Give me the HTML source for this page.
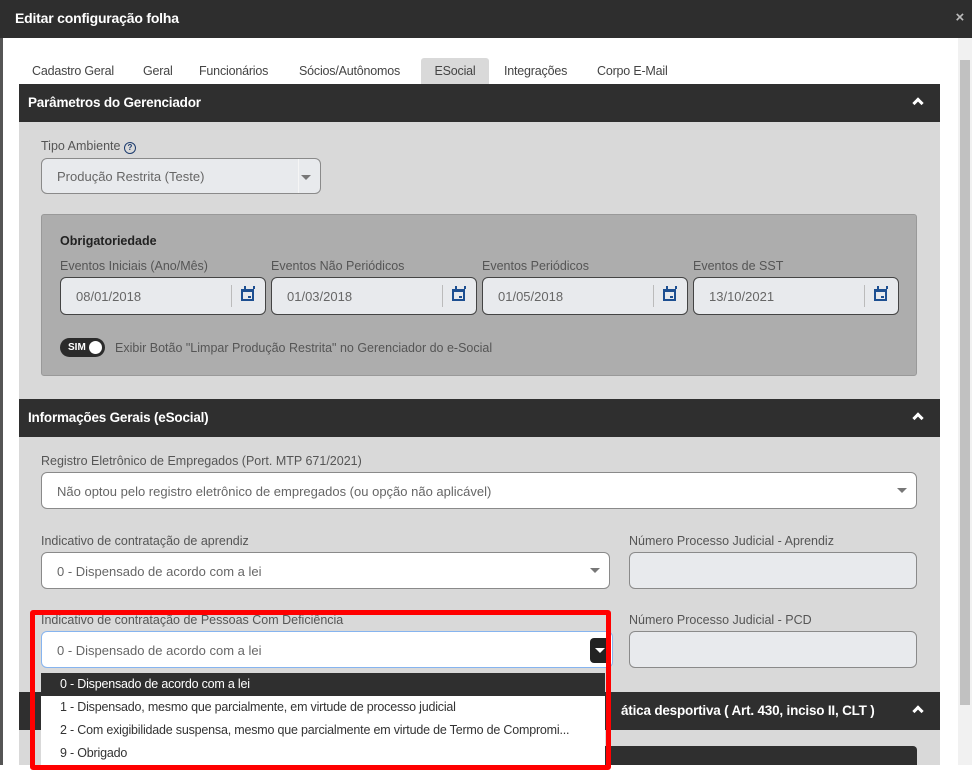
<!DOCTYPE html>
<html><head><meta charset="utf-8"><style>
*{box-sizing:border-box;margin:0;padding:0}
body{width:972px;height:765px;overflow:hidden;background:#fff;font-family:"Liberation Sans",sans-serif;position:relative;color:#555}
.a{position:absolute}
.hdr{left:0;top:0;width:972px;height:38px;background:#2e2e2e;color:#fff;font-weight:bold;font-size:14px;padding:10px 15px;letter-spacing:-0.2px}
.tab{top:58px;height:26px;font-size:12.5px;color:#444;padding-top:6px;letter-spacing:-0.2px}
.ph{left:19px;width:921px;height:38px;background:#2f2f2f;color:#fff;font-weight:bold;font-size:13.5px;padding:11px 9px;letter-spacing:-0.2px}
.chev{position:absolute;right:18px;top:15px;width:8px;height:8px;border-left:3px solid #fff;border-top:3px solid #fff;transform:rotate(45deg)}
.body{left:19px;width:921px;background:#d9d9d9}
.lbl{font-size:12.5px;color:#555}
.inp{border:1px solid #8a8a8a;border-radius:6px;background:#e8eaed;font-size:13px;color:#666}
.sel{background:#fff}
.caret{position:absolute;right:9px;top:15px;border-left:5px solid transparent;border-right:5px solid transparent;border-top:5px solid #777}
.cal{position:absolute;right:0;top:7px;width:34px;height:22px;border-left:1px solid #bbb}
.cal i{position:absolute;left:9px;top:4px;width:13px;height:12px;border:2px solid #1d4f91;border-top-width:3px}
.cal i:before{content:"";position:absolute;left:1px;top:-6px;width:7px;height:3px;border-left:2px solid #1d4f91;border-right:2px solid #1d4f91}
.cal i:after{content:"";position:absolute;right:1px;bottom:1px;width:3px;height:2px;background:#1d4f91}
.opt{left:41px;width:564px;height:23px;font-size:12.5px;color:#333;padding:4px 19px;background:#fff;letter-spacing:-0.2px}
</style></head><body>
<div class="a hdr">Editar configuração folha<span style="position:absolute;right:8px;top:9px;color:#bbb;font-size:15px">×</span></div>
<div class="a" style="left:0;top:38px;width:3px;height:727px;background:#555"></div>
<div class="a" style="left:958px;top:38px;width:14px;height:727px;background:#f1f1f1"></div>
<div class="a" style="left:960px;top:60px;width:10px;height:645px;background:#c1c1c1"></div>
<div class="a tab" style="left:32px">Cadastro Geral</div>
<div class="a tab" style="left:143px">Geral</div>
<div class="a tab" style="left:199px">Funcionários</div>
<div class="a tab" style="left:299px">Sócios/Autônomos</div>
<div class="a tab" style="left:421px;width:68px;background:#d9d9d9;border-radius:3px 3px 0 0;text-align:center">ESocial</div>
<div class="a tab" style="left:504px">Integrações</div>
<div class="a tab" style="left:597px">Corpo E-Mail</div>

<div class="a ph" style="top:84px">Parâmetros do Gerenciador<span class="chev"></span></div>
<div class="a body" style="top:122px;height:277px"></div>
<div class="a lbl" style="left:41px;top:139px">Tipo Ambiente <span style="display:inline-block;width:12px;height:12px;border:1.5px solid #1d3c6e;border-radius:50%;font-size:8px;text-align:center;line-height:9px;color:#1d3c6e;font-weight:bold">?</span></div>
<div class="a inp" style="left:41px;top:158px;width:280px;height:36px;padding:10px 15px">Produção Restrita (Teste)<span class="caret" style="top:16px"></span><span style="position:absolute;right:21px;top:0;width:0;height:34px;border-left:1px solid #f5f5f5"></span></div>
<div class="a" style="left:41px;top:214px;width:876px;height:162px;background:#adadad;border:1px solid #999;border-radius:3px"></div>
<div class="a" style="left:60px;top:234px;font-size:12.5px;font-weight:bold;color:#222">Obrigatoriedade</div>
<div class="a lbl" style="left:60px;top:259px">Eventos Iniciais (Ano/Mês)</div>
<div class="a lbl" style="left:271px;top:259px">Eventos Não Periódicos</div>
<div class="a lbl" style="left:482px;top:259px">Eventos Periódicos</div>
<div class="a lbl" style="left:693px;top:259px">Eventos de SST</div>
<div class="a inp" style="left:60px;top:277px;width:206px;height:38px;padding:11px 15px;border-color:#444">08/01/2018<span class="cal"><i></i></span></div>
<div class="a inp" style="left:271px;top:277px;width:206px;height:38px;padding:11px 15px;border-color:#444">01/03/2018<span class="cal"><i></i></span></div>
<div class="a inp" style="left:482px;top:277px;width:206px;height:38px;padding:11px 15px;border-color:#444">01/05/2018<span class="cal"><i></i></span></div>
<div class="a inp" style="left:693px;top:277px;width:206px;height:38px;padding:11px 15px;border-color:#444">13/10/2021<span class="cal"><i></i></span></div>
<div class="a" style="left:60px;top:338px;width:45px;height:19px;background:#2b2b2b;border-radius:10px;color:#fff;font-size:10px;font-weight:bold;padding:4px 8px">SIM<span style="position:absolute;right:3px;top:3px;width:13px;height:13px;border-radius:50%;background:#fff"></span></div>
<div class="a lbl" style="left:115px;top:341px">Exibir Botão "Limpar Produção Restrita" no Gerenciador do e-Social</div>

<div class="a ph" style="top:399px">Informações Gerais (eSocial)<span class="chev"></span></div>
<div class="a body" style="top:437px;height:255px"></div>
<div class="a lbl" style="left:41px;top:454px">Registro Eletrônico de Empregados (Port. MTP 671/2021)</div>
<div class="a inp sel" style="left:41px;top:472px;width:876px;height:37px;padding:11px 15px">Não optou pelo registro eletrônico de empregados (ou opção não aplicável)<span class="caret"></span></div>
<div class="a lbl" style="left:41px;top:534px">Indicativo de contratação de aprendiz</div>
<div class="a lbl" style="left:629px;top:534px">Número Processo Judicial - Aprendiz</div>
<div class="a inp sel" style="left:41px;top:552px;width:569px;height:37px;padding:11px 15px">0 - Dispensado de acordo com a lei<span class="caret"></span></div>
<div class="a inp" style="left:629px;top:552px;width:288px;height:37px"></div>
<div class="a lbl" style="left:41px;top:613px">Indicativo de contratação de Pessoas Com Deficiência</div>
<div class="a lbl" style="left:629px;top:613px">Número Processo Judicial - PCD</div>
<div class="a inp sel" style="left:41px;top:631px;width:572px;height:37px;padding:11px 15px;border-color:#86b4ef">0 - Dispensado de acordo com a lei<span style="position:absolute;left:548px;top:6px;width:20px;height:25px;background:#222;border-radius:4px"><span class="caret" style="right:5px;top:10px;border-top-color:#fff"></span></span></div>
<div class="a inp" style="left:629px;top:631px;width:288px;height:37px"></div>

<div class="a ph" style="top:692px;padding-left:602px">ática desportiva ( Art. 430, inciso II, CLT )<span class="chev"></span></div>
<div class="a body" style="top:730px;height:35px"></div>
<div class="a" style="left:41px;top:746px;width:876px;height:19px;background:#2f2f2f;border-radius:4px 4px 0 0"></div>

<div class="a opt" style="top:673px;background:#2f2f2f;color:#fff">0 - Dispensado de acordo com a lei</div>
<div class="a opt" style="top:696px">1 - Dispensado, mesmo que parcialmente, em virtude de processo judicial</div>
<div class="a opt" style="top:719px">2 - Com exigibilidade suspensa, mesmo que parcialmente em virtude de Termo de Compromi...</div>
<div class="a opt" style="top:742px">9 - Obrigado</div>
<div class="a" style="left:30px;top:610px;width:581px;height:160px;border:5px solid #f00;border-radius:3px"></div>
</body></html>
